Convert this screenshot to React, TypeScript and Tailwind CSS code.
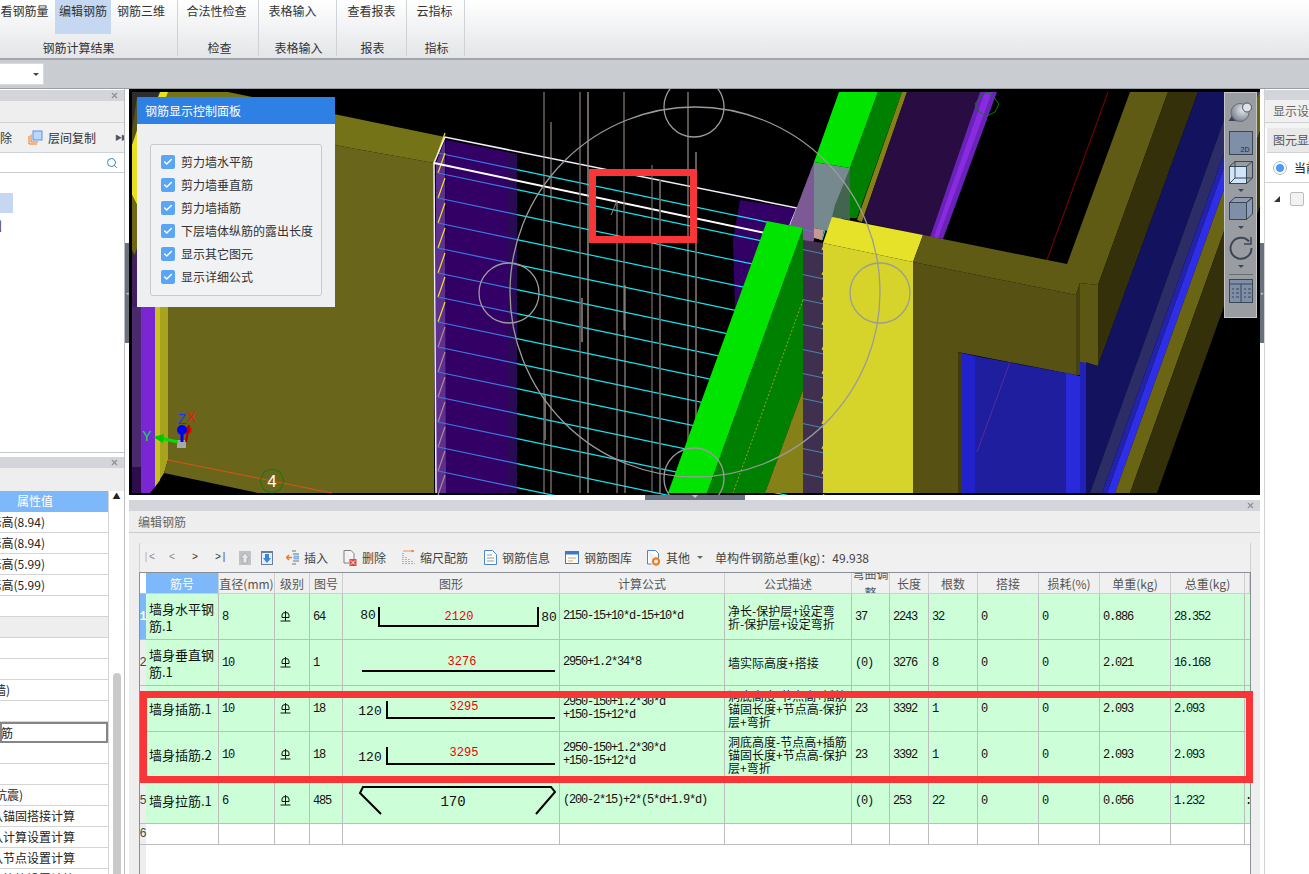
import React from "react";
import { Check, Search, X } from "lucide-react";

const CN = "font-['Noto_Sans_CJK_SC','Liberation_Sans',sans-serif]";
const MONO = "font-['Liberation_Mono','Noto_Sans_CJK_SC',monospace]";

const COLS = "grid grid-cols-[6px_73px_56px_35px_33px_217px_165px_127px_38px_39px_49px_61px_61px_71px_74px_5px]";

function RibbonGroup({ width, label, labelClass, children }: { width: string; label: string; labelClass?: string; children: React.ReactNode }) {
    return (
        <div className={`${width} h-[56px] border-r border-[#cfd2d6] flex flex-col shrink-0`}>
            <div className="h-[34px] flex">{children}</div>
            <div className={`h-[22px] pt-[6px] flex items-center justify-center text-[12px] text-[#333] ${labelClass ?? ""}`}>{label}</div>
        </div>
    );
}

function RibbonBtn({ text, className }: { text: string; className?: string }) {
    return <div className={`h-[34px] pt-[2px] text-[12px] leading-[18px] text-[#333] whitespace-nowrap text-center ${className ?? ""}`}>{text}</div>;
}

function Ribbon() {
    return (
        <div className="h-[60px] shrink-0 bg-linear-to-b from-white to-[#e3e5e8] border-b-2 border-[#a3a6aa] flex">
            <RibbonGroup width="w-[178px]" label="钢筋计算结果" labelClass="pr-[20px]">
                <RibbonBtn text="看钢筋量" className="w-[55px] pr-[6px]" />
                <RibbonBtn text="编辑钢筋" className="w-[56px] bg-[#c6d8f1]" />
                <RibbonBtn text="钢筋三维" className="w-[60px] pl-[6px] pr-[6px]" />
            </RibbonGroup>
            <RibbonGroup width="w-[81px]" label="检查" labelClass="pl-[3px]">
                <RibbonBtn text="合法性检查" className="w-full pr-[3px]" />
            </RibbonGroup>
            <RibbonGroup width="w-[78px]" label="表格输入" labelClass="pl-[2px]">
                <RibbonBtn text="表格输入" className="w-full pr-[10px]" />
            </RibbonGroup>
            <RibbonGroup width="w-[70px]" label="报表" labelClass="pl-[2px]">
                <RibbonBtn text="查看报表" className="w-full" />
            </RibbonGroup>
            <RibbonGroup width="w-[58px]" label="指标" labelClass="pl-[2px]">
                <RibbonBtn text="云指标" className="w-full pr-[2px]" />
            </RibbonGroup>
        </div>
    );
}

function PanelHead({ className }: { className?: string }) {
    return (
        <div className={`h-[11px] shrink-0 bg-[#d3d5da] flex items-center justify-end pr-[5px] ${className ?? ""}`}>
            <X size={9} strokeWidth={3} className="text-[#8b8e93]" />
        </div>
    );
}

const propRows: { text: string; cls: string; kind?: "head" | "sel" }[] = [
    { text: "层顶标高(8.94)", cls: "pr-[63px]" },
    { text: "层顶标高(8.94)", cls: "pr-[63px]" },
    { text: "层底标高(5.99)", cls: "pr-[63px]" },
    { text: "层底标高(5.99)", cls: "pr-[63px]" },
    { text: "", cls: "" },
    { text: "", cls: "", kind: "head" },
    { text: "", cls: "" },
    { text: "", cls: "" },
    { text: "混凝土墙)", cls: "pr-[98px]" },
    { text: "", cls: "" },
    { text: "墙身插筋", cls: "pr-[93px]", kind: "sel" },
    { text: "", cls: "" },
    { text: "", cls: "" },
    { text: "三级抗震)", cls: "pr-[85px]" },
    { text: "按默认锚固搭接计算", cls: "pr-[33px]" },
    { text: "按默认计算设置计算", cls: "pr-[33px]" },
    { text: "按默认节点设置计算", cls: "pr-[33px]" },
    { text: "按默认箍筋设置计算", cls: "pr-[33px]" },
];

function LeftPanels() {
    return (
        <div className="w-[125px] shrink-0 flex flex-col border-r border-[#bcbec2] bg-white">
            <div className="h-[364px] shrink-0 flex flex-col border-b border-[#c4c6ca]">
                <div className="h-px shrink-0 bg-white" />
                <PanelHead />
                <div className="h-[22px] shrink-0 bg-[#eeeeee] border-b border-[#cfd1d4]" />
                <div className="h-[30px] shrink-0 bg-[#f0f0f0] border-b border-[#cfd1d4] flex items-center text-[12px] text-[#333] overflow-hidden">
                    <span className="w-[28px] shrink-0 -ml-[12px] pl-0 whitespace-nowrap">删除</span>
                    <svg width="15" height="15" viewBox="0 0 15 15" className="ml-[12px] shrink-0">
                        <path d="M1 6v8h8M3 4.500v7.500h7" fill="none" stroke="#ee7a22" strokeWidth="1" />
                        <rect x="5" y="1" width="9" height="9" fill="#bcd7fb" stroke="#5b94dc" />
                    </svg>
                    <span className="ml-[5px] whitespace-nowrap">层间复制</span>
                    <span className="ml-[19px] text-[7px] text-[#555] whitespace-nowrap tracking-[-1px]">▶▶</span>
                </div>
                <div className="h-[20px] shrink-0 border-b border-[#c9cbce] flex items-center justify-end pr-[6px]">
                    <Search size={12} strokeWidth={2} className="text-[#2f86c9]" />
                </div>
                <div className="pt-[20px] text-[12px] text-[#222] leading-[20px]">
                    <div className="w-[13px] h-[20px] bg-[#c6d8f1]" />
                    <div className="h-[2px]" />
                    <div className="h-[20px] -ml-[2px]">]</div>
                </div>
            </div>
            <div className="h-[4px] shrink-0" />
            <PanelHead />
            <div className="h-[23px] shrink-0 bg-[#eeeeee]" />
            <div className="flex flex-1 min-h-0">
                <div className="w-[108px] shrink-0 overflow-hidden">
                    <div className="h-[21px] pb-[1px] bg-[#7db8fb] text-white text-[12px] flex items-center pl-[17px]">属性值</div>
                    {propRows.map((r, i) => (
                        <div
                            key={i}
                            className={`h-[21px] flex items-center justify-end text-[12px] text-[#222] whitespace-nowrap overflow-hidden ${r.cls} ${r.kind === "head" ? "bg-[#eeeeee] border-b border-[#d4d4d4]" : ""} ${r.kind === "sel" ? "border-2 border-[#868686]" : ""} ${!r.kind ? "border-b border-[#d4d4d4]" : ""}`}
                        >
                            {r.text}
                        </div>
                    ))}
                </div>
                <div className="flex-1 border-l border-[#d4d4d4] flex flex-col items-center">
                    <span className="mt-[-1px] text-[8px] leading-[12px] text-[#222]">▲</span>
                    <div className="mt-[171px] w-[8px] flex-1 rounded-t-full bg-[#c9c9c9]" />
                </div>
            </div>
        </div>
    );
}

const rungStarts = [153, 173, 198, 223, 248, 273, 297, 322, 347, 372, 397, 422, 447, 471, 495];
const verticals: [number, number, number, string, number][] = [
    [544, 92, 493, "#9c918c", 1],
    [551, 122, 493, "#a79c96", 1],
    [580, 92, 493, "#7d736e", 1.300],
    [588, 92, 493, "#a79c96", 1.300],
    [617, 200, 493, "#a79c96", 1],
    [624, 92, 330, "#7d736e", 1.300],
    [625, 285, 493, "#b3a8a2", 1],
    [652, 165, 493, "#8e847f", 1],
    [660, 180, 493, "#6f6763", 1.800],
    [688, 92, 493, "#b3a8a2", 1],
    [696, 152, 493, "#6f6763", 1.800],
    [582, 298, 342, "#6f6763", 2],
    [545, 395, 440, "#6f6763", 2],
];

function Scene() {
    return (
        <svg width="1131" height="406" viewBox="129 89 1131 406" className="block">
            <rect x="129" y="89" width="1131" height="406" fill="#000" />
            {/* far left column */}
            <polygon points="132,92 160,92 160,97 137,97 137,307 132,307" fill="#2d2d2d" />
            <polygon points="137,97 132,130 132,145 137,130" fill="#56531a" />
            <polygon points="132,145 137,130 137,205 132,195" fill="#e8e020" />
            <polygon points="132,195 137,205 137,260 132,250" fill="#6c6816" />
            <polygon points="132,262 137,248 137,320 132,320" fill="#41215f" />
            <polygon points="132,307 141,307 141,493 132,493" fill="#4a2a6c" />
            <polygon points="132,467 141,467 141,493 132,493" fill="#2c0e4c" />
            <polygon points="141,307 155,307 155,487 150,493 141,493" fill="#7a26d2" />
            <polygon points="155,307 160,307 160,480 155,487" fill="#c9c220" />
            <polygon points="160,307 168,307 168,460 164,473 155,487 160,480" fill="#a8a31e" />
            {/* main olive wall */}
            <polygon points="160,92 228,92 445,137 434,163 168,115" fill="#757318" />
            <polygon points="160,92 168,92 166,97 158,97" fill="#e8e020" />
            <polygon points="168,115 434,163 434,493 258,493 164,473 168,460" fill="#69651a" />
            <line x1="168" y1="460" x2="332" y2="493" stroke="#d8561a" strokeWidth="1" />
            {/* purple face of the wall */}
            <polygon points="436,163 445,140 446,493 436,493" fill="#5e2f8f" />
            <polygon points="446,140 507,152 507,493 446,493" fill="#330066" />
            <polygon points="507,152 517,154 517,493 507,493" fill="#2a0a55" />
            <polygon points="740,200 797,209 790,226 765,232 735,310 733,240" fill="#330066" />
            {/* rungs */}
            {rungStarts.map((y) => (
                <g key={y} strokeWidth="1.200">
                    <line x1="438" y1={y} x2="445" y2={y - 20} stroke={y < 340 ? "#ece41f" : "#b08a90"} />
                    <line x1="438" y1={y} x2="517" y2={y + 16.600} stroke="#3a7ae0" />
                    <line x1="517" y1={y + 16.600} x2="800" y2={y + 76} stroke="#16e4ee" />
                </g>
            ))}
            <polygon points="797,208 829,217 822,240 790,225" fill="none" stroke="#16e4ee" strokeWidth="1" />
            {/* white wall outline */}
            <polyline points="436,493 434,163 445,137 797,208 790,225" fill="none" stroke="#f4eefc" strokeWidth="1.500" />
            <line x1="434" y1="163" x2="765" y2="233" stroke="#fff" strokeWidth="2" />
            {/* verticals */}
            {verticals.map(([x, y1, y2, c, w], i) => (
                <line key={i} x1={x} y1={y1} x2={x} y2={y2} stroke={c} strokeWidth={w} />
            ))}
            <line x1="617" y1="201" x2="611" y2="215" stroke="#8e847f" strokeWidth="1" />
            {/* translucent piece between beams */}
            <polygon points="814,162 814,240 790,300 790,225" fill="#7d5a96" />
            <polygon points="803,240 823,243 823,493 803,493" fill="#40304f" />
            {rungStarts.map((y) => (
                <line key={y} x1="803" y1={y + 76.600} x2="823" y2={y + 80.800} stroke="#4a86a8" strokeWidth="1" />
            ))}
            {rungStarts.map((y) => (
                <line key={y} x1="822" y1={y + 77} x2="824" y2={y + 72} stroke="#ece41f" strokeWidth="1" />
            ))}
            <polygon points="814,162 850,168 850,205 833,232 814,228" fill="#75898e" />
            <polygon points="850,168 850,220 832,217 835,205" fill="#43654f" />
            <polygon points="814,228 824,230 822,240 814,238" fill="#c49a94" />
            {/* back green beam and purple slab */}
            <polygon points="839,92 878,92 850,168 814,162" fill="#00e400" />
            <polygon points="878,92 902,92 857,218 850,218 850,168" fill="#008000" />
            <polygon points="902,92 907,92 862,222 857,220" fill="#858018" />
            <polygon points="907,92 980,92 930,237 862,222" fill="#290d42" />
            <polygon points="980,92 997,92 943,239 930,237" fill="#6b22b8" />
            <polygon points="985,92 992,92 938,238 934,237" fill="#8a2be2" />
            <polygon points="987,92 993,96 999,104 995,112 987,116 979,112 975,104 981,96" fill="none" stroke="#0a7a0a" strokeWidth="1" />
            <line x1="1108" y1="92" x2="1047" y2="260" stroke="#8b0000" strokeWidth="1" />
            {/* front green beam */}
            <polygon points="767,221 803,228 707,493 668,493" fill="#00e400" />
            <polygon points="803,228 803,390 765,493 707,493" fill="#008000" />
            <polygon points="803,390 803,493 765,493" fill="#858018" />
            <line x1="803" y1="300" x2="733" y2="493" stroke="#a3a018" strokeWidth="1" strokeDasharray="2 2" />
            {/* yellow column */}
            <polygon points="832,217 923,235 913,262 823,243" fill="#e6e229" />
            <polygon points="823,243 913,262 913,493 823,493" fill="#d6d32a" />
            {/* olive beam on the right */}
            <polygon points="923,235 1067,264 1130,92 1168,92 1098,285 1080,283 1076,295 913,262" fill="#5f5b14" />
            <polygon points="913,262 1076,295 1076,375 958,352 958,493 913,493" fill="#575213" />
            <polygon points="1076,295 1080,283 1080,375 1076,375" fill="#454210" />
            <polygon points="1080,283 1098,285 1098,366 1080,362" fill="#5c5814" />
            <polygon points="1098,285 1168,92 1198,92 1098,366" fill="#34300a" />
            {/* window below the beam */}
            <polygon points="1198,92 1234,92 1090,493 1086,493 1086,362 1098,366" fill="#12125f" />
            <polygon points="1234,92 1246,92 1102,493 1090,493" fill="#2c2c66" />
            <polygon points="1246,92 1251,92 1107,493 1102,493" fill="#2222aa" />
            <polygon points="1251,92 1259,92 1115,493 1107,493" fill="#2e2ee8" />
            <polygon points="1259,92 1274,92 1130,493 1115,493" fill="#6a6515" />
            <polygon points="1274,92 1301,92 1157,493 1130,493" fill="#34300a" />
            <polygon points="958,352 962,353 962,493 958,493" fill="#3f3b0c" />
            <polygon points="962,353 975,356 975,493 962,493" fill="#2222cc" />
            <polygon points="975,356 1066,373 1066,493 975,493" fill="#1e1e9e" />
            <polygon points="1066,373 1080,376 1080,493 1066,493" fill="#2a2add" />
            <polygon points="1080,362 1086,363 1086,493 1080,493" fill="#2222bb" />
            <line x1="1010" y1="362" x2="977" y2="452" stroke="#5a2a9a" strokeWidth="1" />
            {/* grid circles */}
            <g fill="none" stroke="#9b9b9b" strokeWidth="1.300">
                <circle cx="695" cy="292" r="185" />
                <circle cx="694" cy="107" r="30" />
                <circle cx="509" cy="293" r="30" />
                <circle cx="880" cy="293" r="30" />
                <circle cx="694" cy="478" r="30" />
            </g>
            {/* axis number */}
            <polygon points="272,469 280,472 284,481 280,490 272,493 264,490 260,481 264,472" fill="none" stroke="#0f7a0f" strokeWidth="1" />
            <text x="272" y="487" textAnchor="middle" fontSize="17" fill="#fff" fontFamily="Liberation Sans">4</text>
            {/* axes gizmo */}
            <rect x="177" y="440" width="9" height="8" fill="#a9a9a9" />
            <line x1="178" y1="442" x2="160" y2="438" stroke="#00e000" strokeWidth="3" />
            <polygon points="153,437 164,434 163,443" fill="#00c800" />
            <circle cx="188" cy="430" r="3.500" fill="#e80000" />
            <line x1="186" y1="442" x2="189" y2="425" stroke="#b80000" strokeWidth="2" />
            <line x1="182" y1="442" x2="182" y2="428" stroke="#0000f0" strokeWidth="3" />
            <circle cx="182" cy="430" r="5" fill="#0000f0" />
            <text x="147" y="441" textAnchor="middle" fontSize="14" fill="#00e04a" fontFamily="Liberation Sans">Y</text>
            <text x="182" y="424" textAnchor="middle" fontSize="14" fill="#1a35ff" fontFamily="Liberation Sans">Z</text>
            <text x="192" y="422" textAnchor="middle" fontSize="14" fill="#f01818" fontFamily="Liberation Sans">X</text>
        </svg>
    );
}

function ControlPanel() {
    const items = ["剪力墙水平筋", "剪力墙垂直筋", "剪力墙插筋", "下层墙体纵筋的露出长度", "显示其它图元", "显示详细公式"];
    return (
        <div className="absolute left-[8px] top-[8px] w-[198px] h-[210px] bg-[#eeeff0] flex flex-col">
            <div className="h-[27px] shrink-0 bg-[#2f80e4] text-white text-[12px] flex items-center pl-[8px]">钢筋显示控制面板</div>
            <div className="mx-[13px] mt-[20px] h-[152px] bg-[#f1f2f3] border border-[#c8cacd] rounded-[3px] pl-[10px] pt-[5px]">
                {items.map((t) => (
                    <div key={t} className="h-[23px] flex items-center gap-[6px] text-[12px] text-[#333] whitespace-nowrap">
                        <span className="w-[14px] h-[14px] rounded-[2px] bg-[#5aa5f5] flex items-center justify-center shrink-0">
                            <Check size={10} strokeWidth={3.500} className="text-white" />
                        </span>
                        {t}
                    </div>
                ))}
            </div>
        </div>
    );
}

function ViewToolbar() {
    const line = "#3b4654";
    const arrow = <span className="block w-0 h-0 border-x-[3px] border-x-transparent border-t-[3px] border-t-[#3b4654]" />;
    return (
        <div className="absolute left-[1095px] top-[3px] w-[33px] h-[226px] bg-[#999ca0] border border-[#c4c6c9] flex flex-col items-center pt-[8px]">
            <svg width="26" height="22" viewBox="0 0 26 22">
                <defs>
                    <radialGradient id="planet" cx="0.650" cy="0.350" r="0.800">
                        <stop offset="0" stopColor="#e6e9ee" />
                        <stop offset="1" stopColor="#69727f" />
                    </radialGradient>
                </defs>
                <path d="M0.500 20 L5 13 L9 20 Z" fill="#3b4654" />
                <circle cx="12" cy="11.500" r="9" fill="url(#planet)" stroke="#59616d" strokeWidth="0.800" />
                <circle cx="19" cy="6.500" r="4.500" fill="#dfe3e8" stroke="#4a515c" />
            </svg>
            <div className="mt-[8px] w-[24px] h-[24px] bg-[#7f8fa8] border border-[#3b4654] flex items-end justify-end pr-[2px] text-[7px] leading-[9px] text-[#1f2937] font-['Liberation_Sans',sans-serif]">2D</div>
            <svg width="24" height="23" viewBox="0 0 24 23" className="mt-[6px]">
                <rect x="0.500" y="5.500" width="17" height="17" fill="#cfe5fb" stroke={line} />
                <path d="M0.500 5.500L6 0.500h17.500v16.500L17.500 22.500M6 0.500V17H23.500M6 17L0.500 22.500M17.500 5.500L23.500 0.500" fill="none" stroke={line} strokeWidth="1" />
            </svg>
            <div className="mt-[5px]">{arrow}</div>
            <svg width="24" height="23" viewBox="0 0 24 23" className="mt-[5px]">
                <path d="M0.500 5.500h17v17h-17z" fill="#7f8fa8" stroke={line} />
                <path d="M0.500 5.500L6 0.500h17.500L17.500 5.500zM17.500 5.500l6-5v16.500l-6 5.500z" fill="#8f9db3" stroke={line} />
            </svg>
            <div className="mt-[6px]">{arrow}</div>
            <svg width="24" height="24" viewBox="0 0 24 24" className="mt-[7px]">
                <path d="M20 5.500A10.500 10.500 0 1 0 22.500 12" fill="none" stroke={line} strokeWidth="2" />
                <path d="M22 1v7h-7" fill="none" stroke={line} strokeWidth="1.500" />
            </svg>
            <div className="mt-[5px]">{arrow}</div>
            <div className="mt-[6px] w-[24px] h-px bg-[#6b7077]" />
            <svg width="24" height="24" viewBox="0 0 24 24" className="mt-[4px]">
                <rect x="0.500" y="0.500" width="23" height="23" fill="#7f8fa8" stroke={line} />
                <path d="M0 5h24M12 5v19M3 10h2M3 14h2M3 18h2M7 10h3M7 14h3M7 18h3M15 10h2M15 14h2M15 18h2M19 10h3M19 14h3M19 18h3" stroke={line} strokeWidth="1" />
            </svg>
        </div>
    );
}

function ToolBtn({ icon, text, className }: { icon: React.ReactNode; text: string; className: string }) {
    return (
        <div className={`flex items-center gap-[5px] text-[12px] text-[#444] whitespace-nowrap shrink-0 ${className}`}>
            {icon}
            {text}
        </div>
    );
}

function TableToolbar() {
    return (
        <div className="h-[29px] shrink-0 flex items-center border-x border-[#cfd1d4] bg-[#f0f0f0]">
            <div className={`w-[99px] shrink-0 flex items-center text-[10px] text-[#888] pl-[3px] ${MONO}`}>
                <span className="w-[26px]"><span className="text-[#c9a0a0]">|</span>&lt;</span>
                <span className="w-[23px]">&lt;</span>
                <span className="w-[23px] text-[#333]">&gt;</span>
                <span className="text-[#333]">&gt;<span className="text-[#553355]">|</span></span>
            </div>
            <svg width="12" height="14" viewBox="0 0 12 14" className="shrink-0">
                <rect width="12" height="14" fill="#bfc2c6" />
                <path d="M6 2l4 5H8v5H4V7H2z" fill="#e8e8e8" stroke="#8f8f8f" strokeWidth="0.500" />
            </svg>
            <svg width="12" height="14" viewBox="0 0 12 14" className="ml-[10px] shrink-0">
                <rect width="12" height="14" fill="#6d7f97" />
                <rect y="2" x="1" width="10" height="11" fill="#e6eefb" />
                <path d="M6 12L2 7h2V3h4v4h2z" fill="#3a85dc" />
            </svg>
            <ToolBtn
                className="ml-[13px] w-[43px]"
                text="插入"
                icon={
                    <svg width="13" height="15" viewBox="0 0 13 15" className="shrink-0">
                        <path d="M6 1h4M7 4h6M7 11h6M6 14h4" stroke="#6b7480" strokeWidth="1" />
                        <rect x="8" y="6" width="5" height="3" fill="#9cc3f0" stroke="#5b94dc" strokeWidth="0.600" />
                        <path d="M0 7.500h6M3 5L0.500 7.500 3 10" fill="none" stroke="#ee7a22" strokeWidth="1.500" />
                    </svg>
                }
            />
            <ToolBtn
                className="ml-[14px] w-[43px]"
                text="删除"
                icon={
                    <svg width="14" height="16" viewBox="0 0 14 16" className="shrink-0">
                        <path d="M1 0.500h7l3 3V9M1 0.500V13h5" fill="#f5f5f5" stroke="#7a7f86" />
                        <rect x="6.500" y="9" width="7" height="7" fill="#e0483e" />
                        <path d="M8 10.500l4 4m0-4l-4 4" stroke="#fff" strokeWidth="1" />
                    </svg>
                }
            />
            <ToolBtn
                className="ml-[16px] w-[66px]"
                text="缩尺配筋"
                icon={
                    <svg width="13" height="15" viewBox="0 0 13 15" className="shrink-0">
                        <path d="M1 14V3M4 14V6M7 14V8M10 14v-3M13 14v-1" stroke="#707680" strokeWidth="1" strokeDasharray="1 1" />
                        <path d="M1 1h11M9 0l3 1-3 1" fill="none" stroke="#ee7a22" strokeWidth="0.800" />
                    </svg>
                }
            />
            <ToolBtn
                className="ml-[16px] w-[66px]"
                text="钢筋信息"
                icon={
                    <svg width="13" height="15" viewBox="0 0 13 15" className="shrink-0">
                        <path d="M0.500 0.500h8l4 4v10h-12z" fill="#fff" stroke="#4a86d0" />
                        <path d="M3 5h5M3 8h7M3 11h7" stroke="#8a97a8" />
                    </svg>
                }
            />
            <ToolBtn
                className="ml-[15px] w-[67px]"
                text="钢筋图库"
                icon={
                    <svg width="14" height="13" viewBox="0 0 14 13" className="shrink-0">
                        <rect x="0.500" y="0.500" width="13" height="12" fill="#fff" stroke="#3a7ac8" />
                        <rect x="0.500" y="0.500" width="13" height="3" fill="#3a7ac8" />
                        <path d="M3 7h8M3 10h5" stroke="#d8a060" />
                    </svg>
                }
            />
            <ToolBtn
                className="ml-[15px] w-[43px]"
                text="其他"
                icon={
                    <svg width="14" height="16" viewBox="0 0 14 16" className="shrink-0">
                        <path d="M0.500 0.500h8l3 3V8M0.500 0.500V14h4" fill="#fff" stroke="#4a86d0" />
                        <circle cx="9" cy="11.500" r="3" fill="none" stroke="#ee7a22" strokeWidth="2" />
                        <path d="M9 7v2M9 14v2M5 11.500h2M11 11.500h2" stroke="#ee7a22" />
                    </svg>
                }
            />
            <span className="ml-[7px] w-0 h-0 border-x-[3px] border-x-transparent border-t-[3px] border-t-[#666] shrink-0" />
            <span className="ml-[12px] text-[12px] text-[#444] whitespace-nowrap">单构件钢筋总重(kg)：49.938</span>
        </div>
    );
}

function Grade() {
    return (
        <svg width="11" height="11" viewBox="0 0 11 11">
            <path d="M2 6.500V4a3.500 2.500 0 0 1 7 0v2.500zM5.500 0v10M0.500 10h10" fill="none" stroke="#111" strokeWidth="1" />
        </svg>
    );
}

function Bar({ pts, labels }: { pts: string; labels: { x: number; y: number; t: string; red?: boolean; size?: number }[] }) {
    return (
        <svg width="216" height="45" viewBox="0 0 216 45" className="block">
            <polyline points={pts} fill="none" stroke="#000" strokeWidth="2" />
            {labels.map((l) => (
                <text key={l.t + l.x} x={l.x} y={l.y} textAnchor="middle" fontSize={l.size ?? 12} fill={l.red ? "#f00000" : "#111"} fontFamily="Liberation Mono">
                    {l.t}
                </text>
            ))}
        </svg>
    );
}

type BarRow = {
    n: string;
    name: string[];
    d: string;
    fig: string;
    shape: React.ReactNode;
    formula: string[];
    desc: string[];
    bend: string;
    len: string;
    cnt: string;
    unit: string;
    total: string;
    tail?: string;
};

const rows: BarRow[] = [
    {
        n: "1", name: ["墙身水平钢", "筋.1"], d: "8", fig: "64",
        shape: <Bar pts="36,13 36,32 195,32 195,13" labels={[{ x: 25, y: 25, t: "80", size: 13 }, { x: 206, y: 27, t: "80", size: 13 }, { x: 116, y: 26, t: "2120", red: true }]} />,
        formula: ["2150-15+10*d-15+10*d"], desc: ["净长-保护层+设定弯", "折-保护层+设定弯折"], bend: "37", len: "2243", cnt: "32", unit: "0.886", total: "28.352",
    },
    {
        n: "2", name: ["墙身垂直钢", "筋.1"], d: "10", fig: "1",
        shape: <Bar pts="19,31 212,31" labels={[{ x: 119, y: 25, t: "3276", red: true }]} />,
        formula: ["2950+1.2*34*8"], desc: ["墙实际高度+搭接"], bend: "(0)", len: "3276", cnt: "8", unit: "2.021", total: "16.168",
    },
    {
        n: "3", name: ["墙身插筋.1"], d: "10", fig: "18",
        shape: <Bar pts="44,15 44,32 212,32" labels={[{ x: 27, y: 29, t: "120", size: 13 }, { x: 121, y: 24, t: "3295", red: true }]} />,
        formula: ["2950-150+1.2*30*d", "+150-15+12*d"], desc: ["洞底高度-节点高+插筋", "锚固长度+节点高-保护", "层+弯折"], bend: "23", len: "3392", cnt: "1", unit: "2.093", total: "2.093",
    },
    {
        n: "4", name: ["墙身插筋.2"], d: "10", fig: "18",
        shape: <Bar pts="44,15 44,32 212,32" labels={[{ x: 27, y: 29, t: "120", size: 13 }, { x: 121, y: 24, t: "3295", red: true }]} />,
        formula: ["2950-150+1.2*30*d", "+150-15+12*d"], desc: ["洞底高度-节点高+插筋", "锚固长度+节点高-保护", "层+弯折"], bend: "23", len: "3392", cnt: "1", unit: "2.093", total: "2.093",
    },
    {
        n: "5", name: ["墙身拉筋.1"], d: "6", fig: "485",
        shape: <Bar pts="38,36 17,15 20,9 208,9 212,14 193,36" labels={[{ x: 110, y: 28, t: "170", size: 14 }]} />,
        formula: ["(200-2*15)+2*(5*d+1.9*d)"], desc: [], bend: "(0)", len: "253", cnt: "22", unit: "0.056", total: "1.232", tail: ":",
    },
];

const headers = ["筋号", "直径(mm)", "级别", "图号", "图形", "计算公式", "公式描述", "弯曲调整", "长度", "根数", "搭接", "损耗(%)", "单重(kg)", "总重(kg)", ""];

const cell = "border-r border-b border-[#bdbdbd] overflow-hidden flex items-center";
const num = `${cell} pl-[3px] text-[12px] tracking-[-1.200px] text-[#111] ${MONO}`;

function RebarTable() {
    return (
        <div className="flex-1 min-h-0 flex flex-col bg-white border-x border-t border-[#8a8f96] overflow-hidden">
            <div className={`${COLS} h-[21px] shrink-0 bg-[#f0f0f0]`}>
                <div className="border-b border-[#bdbdbd] bg-white" />
                {headers.map((h, i) => (
                    <div
                        key={i}
                        className={`border-r border-b border-[#cfcfcf] overflow-hidden flex items-center justify-center text-[12px] leading-[19px] text-center ${i === 0 ? "bg-[#7db8fb] text-white" : "text-[#555]"}`}
                    >
                        {h}
                    </div>
                ))}
            </div>
            {rows.map((r) => (
                <div key={r.n} className={`${COLS} h-[46px] shrink-0 bg-[#ccffd8]`}>
                    <div className={`flex items-center justify-center text-[12px] border-b border-[#bdbdbd] ${r.n === "1" ? "bg-[#7db8fb] text-white font-bold" : "bg-[#eeeeee] text-[#444]"} ${MONO}`}>{r.n}</div>
                    <div className={`${cell} pl-[3px] text-[13px] leading-[17px] text-[#111]`}>
                        <div>{r.name.map((l) => <div key={l} className="whitespace-nowrap">{l}</div>)}</div>
                    </div>
                    <div className={num}>{r.d}</div>
                    <div className={`${cell} pl-[5px]`}><Grade /></div>
                    <div className={num}>{r.fig}</div>
                    <div className={`${cell} items-start`}>{r.shape}</div>
                    <div className={num}>
                        <div className="leading-[13px]">{r.formula.map((l) => <div key={l} className="whitespace-nowrap">{l}</div>)}</div>
                    </div>
                    <div className={`${cell} pl-[3px] text-[12px] leading-[13px] text-[#111]`}>
                        <div>{r.desc.map((l) => <div key={l} className="whitespace-nowrap">{l}</div>)}</div>
                    </div>
                    <div className={num}>{r.bend}</div>
                    <div className={num}>{r.len}</div>
                    <div className={num}>{r.cnt}</div>
                    <div className={num}>0</div>
                    <div className={num}>0</div>
                    <div className={num}>{r.unit}</div>
                    <div className={num}>{r.total}</div>
                    <div className={`border-b border-[#bdbdbd] flex items-center text-[12px] ${MONO}`}>{r.tail ?? ""}</div>
                </div>
            ))}
            <div className={`${COLS} h-[21px] shrink-0 bg-white`}>
                <div className={`flex items-center justify-center text-[12px] border-b border-[#bdbdbd] bg-[#eeeeee] text-[#444] ${MONO}`}>6</div>
                {Array.from({ length: 14 }).map((_, i) => <div key={i} className="border-r border-b border-[#bdbdbd]" />)}
                <div className="border-b border-[#bdbdbd]" />
            </div>
            <div className="flex-1 flex"><div className="w-[6px] bg-[#eeeeee]" /></div>
        </div>
    );
}

function Center() {
    return (
        <div className="w-[1131px] shrink-0 flex flex-col">
            <div className="relative h-[406px] shrink-0 overflow-hidden">
                <Scene />
                <ControlPanel />
                <ViewToolbar />
                <div className="absolute left-[460px] top-[80px] w-[108px] h-[74px] border-[7px] border-[#fa3538]" />
            </div>
            <div className="h-[5px] shrink-0 bg-white flex justify-center">
                <div className="w-[100px] h-[5px] bg-[#6b7480] flex justify-center">
                    <span className="w-0 h-0 border-x-[3px] border-x-transparent border-t-[3px] border-t-[#c4c8cc]" />
                </div>
            </div>
            <div className="relative flex-1 min-h-0 flex flex-col bg-[#eeeeee]">
                <PanelHead />
                <div className="h-[22px] shrink-0 border-b border-[#c9cbce] flex items-center pl-[9px] text-[12px] text-[#666]">编辑钢筋</div>
                <div className="h-[10px] shrink-0" />
                <div className="flex-1 min-h-0 flex flex-col ml-[10px] w-[1112px]">
                    <TableToolbar />
                    <RebarTable />
                </div>
                <div className="absolute left-[11px] top-[191px] w-[1113px] h-[92px] border-[7px] border-[#fa3538]" />
            </div>
        </div>
    );
}

function RightPanel() {
    return (
        <div className="flex-1 min-w-0 flex flex-col bg-white border-l border-[#d0d2d5] overflow-hidden text-[12px] whitespace-nowrap">
            <div className="h-px shrink-0" />
            <div className="h-[10px] shrink-0 bg-[#d3d5da]" />
            <div className="h-[23px] shrink-0 bg-[#f0f0f0] border-b border-[#cfd1d4] flex items-center pl-[8px] text-[#666]">显示设置</div>
            <div className="h-[5px] shrink-0 bg-[#f4f4f4]" />
            <div className="h-[25px] shrink-0 bg-[#e9e9e9] border-b border-[#cfd1d4] ml-[2px] flex items-center pl-[6px] text-[#555]">图元显示</div>
            <div className="h-[30px] shrink-0 border-b border-[#cfd1d4] flex items-center pl-[8px] gap-[7px] text-[#222]">
                <span className="w-[14px] h-[14px] rounded-full border border-[#b9bcc0] flex items-center justify-center shrink-0">
                    <span className="w-[8px] h-[8px] rounded-full bg-[#4a9cf5]" />
                </span>
                当前
            </div>
            <div className="h-[31px] flex items-center pl-[9px] gap-[10px]">
                <span className="w-0 h-0 border-l-[6px] border-l-transparent border-b-[6px] border-b-[#333] shrink-0" />
                <span className="w-[14px] h-[14px] rounded-[2px] border border-[#b9bcc0] bg-[#f2f2f2] shrink-0" />
            </div>
        </div>
    );
}

function Splitter({ right }: { right?: boolean }) {
    return (
        <div className="w-[4px] shrink-0 bg-white pt-[154px]">
            <div className="h-[100px] bg-[#69727c] flex items-center justify-center text-[5px] text-[#c8ccd0]">{right ? "▸" : "◂"}</div>
        </div>
    );
}

export default function App() {
    return (
        <div className={`w-[1309px] h-[874px] overflow-hidden flex flex-col bg-white ${CN}`}>
            <Ribbon />
            <div className="h-[29px] shrink-0 bg-[#c9ccd1] border-b border-[#9a9da1] pt-[3px]">
                <div className="w-[44px] h-[22px] bg-white border border-[#d8dadd] border-l-0 flex items-center justify-end pr-[4px]">
                    <span className="w-0 h-0 border-x-[3px] border-x-transparent border-t-[3px] border-t-[#444]" />
                </div>
            </div>
            <div className="flex flex-1 min-h-0">
                <LeftPanels />
                <Splitter />
                <Center />
                <Splitter right />
                <RightPanel />
            </div>
        </div>
    );
}
